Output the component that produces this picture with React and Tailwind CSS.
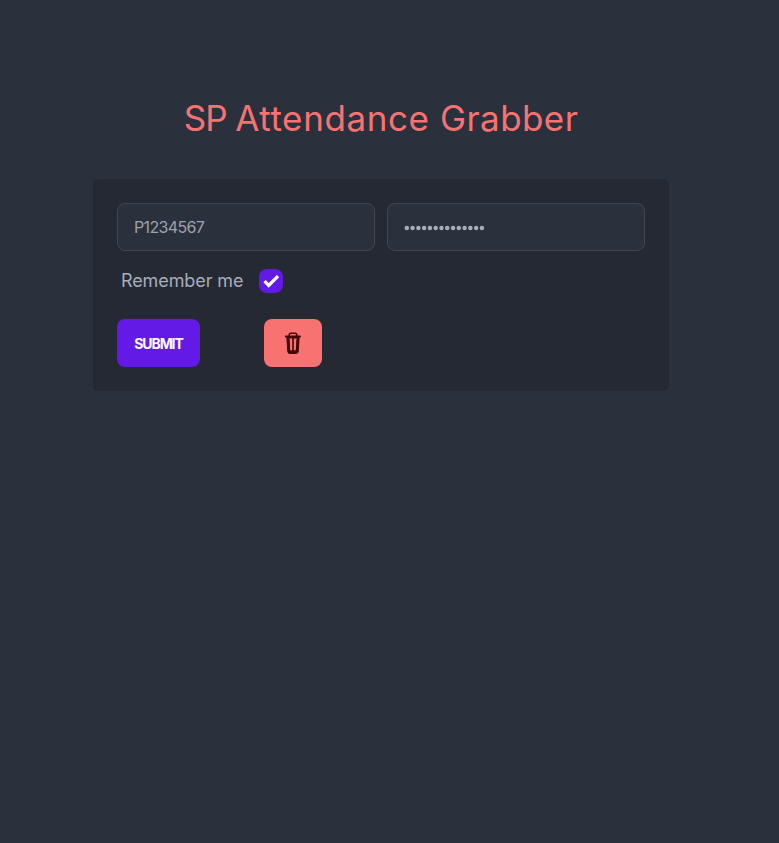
import React from "react";

function TrashIcon() {
  return (
    <svg
      viewBox="0 0 24 24"
      className="h-6 w-6"
      fill="none"
      stroke="currentColor"
      strokeLinecap="round"
      strokeLinejoin="round"
    >
      <path strokeWidth="1.5" d="M8.2 5V4c0-1.1.7-1.7 1.6-1.7h4.4c.9 0 1.6.6 1.6 1.7v1" />
      <path strokeWidth="1.8" d="M4.8 5.5h14.4" />
      <path strokeWidth="2.4" d="M6.6 6.2l.8 14c.1 1 .6 1.5 1.5 1.5h6.2c.9 0 1.4-.5 1.5-1.5l.8-14" />
      <path strokeWidth="1.6" d="M12 6.5v14" />
      <path strokeWidth="1.4" d="M7.6 6.8h8.8M8.6 20h6.8M8 8.5l.5 11M16 8.5l-.5 11" />
    </svg>
  );
}

function CheckMark() {
  return (
    <svg viewBox="0 0 24 24" className="h-6 w-6" fill="none" stroke="white" strokeWidth="3.2">
      <path d="M5.5 12.2l4.2 4.2L19 7.1" />
    </svg>
  );
}

function PasswordDots() {
  return (
    <svg viewBox="0 0 82 6" className="h-1.5 w-[82px]" fill="#a6adbb">
      {Array.from({ length: 14 }, (_, i) => (
        <circle key={i} cx={2.8 + i * 5.78} cy="3" r="2.25" />
      ))}
    </svg>
  );
}

export default function App() {
  return (
    <main className="min-h-screen bg-[#2a303c] pt-24 pr-[17px] font-['Inter',sans-serif] text-[#a6adbb]">
      <h1 className="text-center text-[35px] leading-[45px] font-normal whitespace-nowrap text-[#f87272]">
        <span className="tracking-[-1.1px]">SP </span>
        <span className="tracking-[0.6px]">Attendance </span>
        <span className="tracking-[0.4px]">Grabber</span>
      </h1>
      <form className="mx-auto mt-[38px] h-[212px] w-xl rounded-md bg-[#242933] p-6">
        <div className="flex gap-3">
          <input
            type="text"
            placeholder="P1234567"
            className="h-12 w-[258px] rounded-lg border border-[#414650] bg-[#2a303c] px-4 text-base tracking-[-0.65px] placeholder:text-[#9ca3af]"
          />
          <div className="flex h-12 w-[258px] items-center rounded-lg border border-[#414650] bg-[#2a303c] px-4 pt-px">
            <PasswordDots />
          </div>
        </div>
        <label className="mt-[18px] flex h-6 items-center gap-4 pl-1">
          <span className="w-[122px] pb-px text-[18px] tracking-[-0.1px] whitespace-nowrap">
            Remember me
          </span>
          <span className="h-6 w-6 rounded-lg bg-[#641ae6]">
            <CheckMark />
          </span>
        </label>
        <div className="mt-[26px] flex gap-16">
          <button
            type="button"
            className="h-12 w-[83px] rounded-lg bg-[#641ae6] pt-px text-sm font-bold tracking-[-1.1px] whitespace-nowrap text-white"
          >
            SUBMIT
          </button>
          <button
            type="button"
            className="flex h-12 w-[58px] items-center justify-center rounded-lg bg-[#f87272] text-[#470000]"
          >
            <TrashIcon />
          </button>
        </div>
      </form>
    </main>
  );
}
